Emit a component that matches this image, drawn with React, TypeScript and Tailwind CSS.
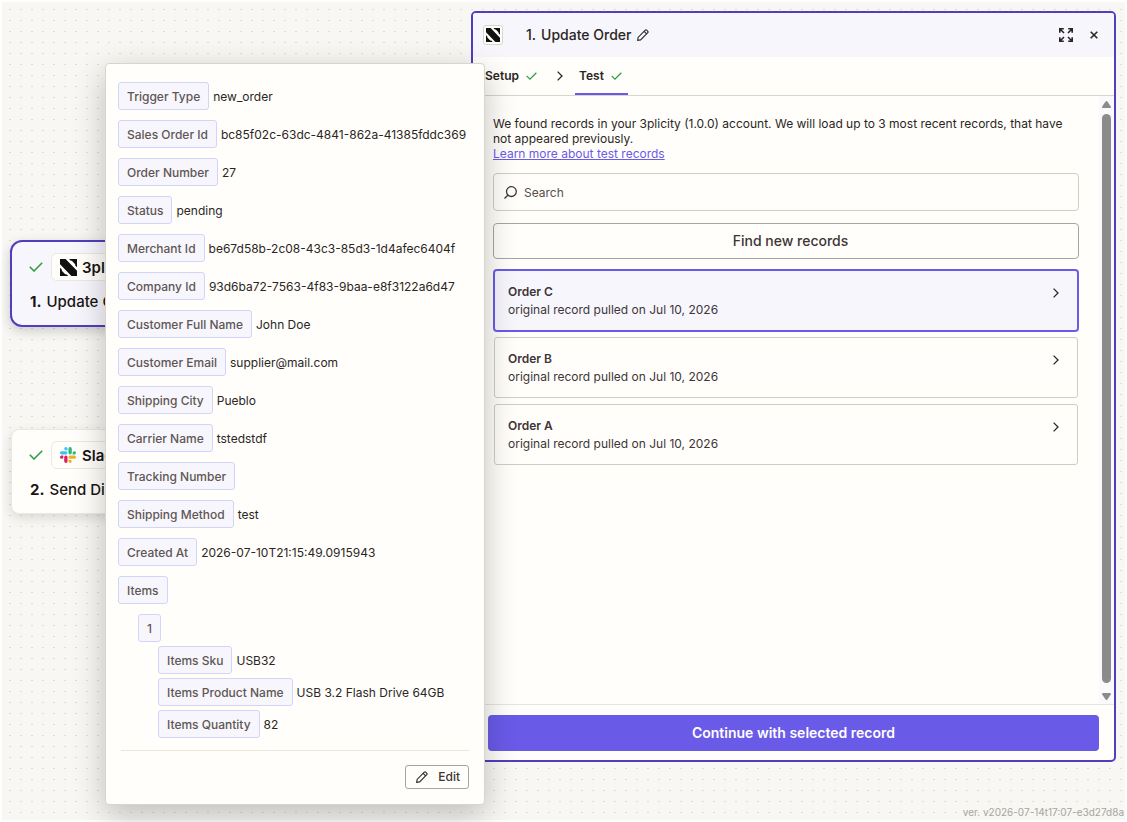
type IconProps = {
  className?: string;
};

type Field = {
  label: string;
  value?: string;
};

const fields: Field[] = [
  { label: "Trigger Type", value: "new_order" },
  { label: "Sales Order Id", value: "bc85f02c-63dc-4841-862a-41385fddc369" },
  { label: "Order Number", value: "27" },
  { label: "Status", value: "pending" },
  { label: "Merchant Id", value: "be67d58b-2c08-43c3-85d3-1d4afec6404f" },
  { label: "Company Id", value: "93d6ba72-7563-4f83-9baa-e8f3122a6d47" },
  { label: "Customer Full Name", value: "John Doe" },
  { label: "Customer Email", value: "supplier@mail.com" },
  { label: "Shipping City", value: "Pueblo" },
  { label: "Carrier Name", value: "tstedstdf" },
  { label: "Tracking Number" },
  { label: "Shipping Method", value: "test" },
  { label: "Created At", value: "2026-07-10T21:15:49.0915943" },
  { label: "Items" },
];

const itemFields: Field[] = [
  { label: "Items Sku", value: "USB32" },
  { label: "Items Product Name", value: "USB 3.2 Flash Drive 64GB" },
  { label: "Items Quantity", value: "82" },
];

const records = [
  { name: "Order C", selected: true },
  { name: "Order B", selected: false },
  { name: "Order A", selected: false },
];

const CheckIcon = ({ className }: IconProps) => (
  <svg viewBox="0 0 14 10" fill="none" className={className}>
    <path d="M0.8 4.8 5 9 13.2 0.8" stroke="#2ea043" strokeWidth="1.6" />
  </svg>
);

const PencilIcon = ({ className }: IconProps) => (
  <svg viewBox="0 0 12 12" fill="none" stroke="#2b2623" strokeWidth="1.1" className={className}>
    <path d="M0.7 11.3 1.1 8.4 8.3 1.2Q9 0.5 9.7 1.2L10.8 2.3Q11.5 3 10.8 3.7L3.6 10.9ZM7.2 2.4 9.6 4.8" />
  </svg>
);

const BrandIcon = ({ className }: IconProps) => (
  <svg viewBox="0 0 17 17" fill="#111111" className={className}>
    <path d="M0 0H5.6L17 11.8V17H11.4L0 5.2ZM9 0H17V8.2L15.2 6.4V5.2L11.8 1.8H10.8ZM0 8.8 1.8 10.6V11.8L5.2 15.2H6.4L8.2 17H0Z" />
  </svg>
);

const SlackIcon = ({ className }: IconProps) => (
  <svg viewBox="0 0 24 24" className={className}>
    <path
      fill="#36c5f0"
      d="M8.8 0a2.5 2.5 0 1 0 0 5h2.5V2.5A2.5 2.5 0 0 0 8.8 0ZM8.8 6.3H2.5a2.5 2.5 0 0 0 0 5h6.3a2.5 2.5 0 0 0 0-5Z"
    />
    <path
      fill="#2eb67d"
      d="M24 8.8a2.5 2.5 0 1 0-5 0v2.5h2.5A2.5 2.5 0 0 0 24 8.8ZM17.7 8.8V2.5a2.5 2.5 0 0 0-5 0v6.3a2.5 2.5 0 0 0 5 0Z"
    />
    <path
      fill="#ecb22e"
      d="M15.2 24a2.5 2.5 0 1 0 0-5h-2.5v2.5a2.5 2.5 0 0 0 2.5 2.5ZM15.2 17.7h6.3a2.5 2.5 0 0 0 0-5h-6.3a2.5 2.5 0 0 0 0 5Z"
    />
    <path
      fill="#e01e5a"
      d="M0 15.2a2.5 2.5 0 1 0 5 0v-2.5H2.5A2.5 2.5 0 0 0 0 15.2ZM6.3 15.2v6.3a2.5 2.5 0 0 0 5 0v-6.3a2.5 2.5 0 0 0-5 0Z"
    />
  </svg>
);

const ChevronIcon = ({ className }: IconProps) => (
  <svg viewBox="0 0 6 10" fill="none" className={className}>
    <path d="M0.6 0.6 5 5 0.6 9.4" stroke="#2b2623" strokeWidth="1.3" />
  </svg>
);

const ExpandIcon = () => (
  <svg viewBox="0 0 14 14" fill="none" stroke="#2b2623" strokeWidth="1.6" className="h-3.5 w-3.5">
    <path d="M0.8 4.8V0.8H4.8M0.8 0.8 5 5M9.2 0.8H13.2V4.8M13.2 0.8 9 5M0.8 9.2V13.2H4.8M0.8 13.2 5 9M13.2 9.2V13.2H9.2M13.2 13.2 9 9" />
  </svg>
);

const CloseIcon = () => (
  <svg viewBox="0 0 8 8" fill="none" className="h-2 w-2">
    <path d="M0.7 0.7 7.3 7.3M7.3 0.7 0.7 7.3" stroke="#2b2623" strokeWidth="1.6" />
  </svg>
);

const SearchIcon = () => (
  <svg viewBox="0 0 13 13" fill="none" stroke="#403536" strokeWidth="1.3" className="h-[13px] w-[13px]">
    <circle cx="7.4" cy="5.6" r="4.9" />
    <path d="M3.8 9.2 0.5 12.5" />
  </svg>
);

const FieldRow = ({ label, value }: Field) => (
  <div className="flex h-7 items-center gap-1 text-[12px] whitespace-nowrap">
    <span className="flex h-7 items-center rounded-[3px] border border-[#d3d4f9] bg-[#f7f6fd] px-2 pt-px font-medium text-[#5f5654]">
      {label}
    </span>
    {value && <span className="pt-px text-[#2b2623]">{value}</span>}
  </div>
);

const RecordPopup = () => (
  <div className="absolute top-[63px] left-[105px] flex h-[742px] w-[380px] flex-col rounded border border-[#d7d5cc] bg-[#fffefb] px-3 pt-[18px] shadow-[0_10px_32px_rgba(0,0,0,0.24)]">
    <div className="flex flex-col gap-2.5">
      {fields.map((field) => (
        <FieldRow key={field.label} {...field} />
      ))}
    </div>
    <div className="mt-2.5 flex flex-col gap-1 pl-5">
      <FieldRow label="1" />
      <div className="flex flex-col gap-1 pl-5">
        {itemFields.map((field) => (
          <FieldRow key={field.label} {...field} />
        ))}
      </div>
    </div>
    <div className="mx-[3px] mt-3 flex justify-end border-t border-[#e8e7dc] pt-3.5">
      <button className="flex h-6 w-16 items-center justify-between rounded-[3px] border border-[#a8a5a0] pr-2 pl-2.5 text-[12px] font-medium text-[#403536]">
        <PencilIcon className="h-3 w-3" />
        Edit
      </button>
    </div>
  </div>
);

const StepPanel = () => (
  <div className="absolute top-[11px] left-[471px] flex h-[751px] w-[645px] flex-col overflow-hidden rounded-[5px] border-2 border-[#503ebd] bg-[#fffefb]">
    <div className="flex h-11 shrink-0 items-center bg-[#f7f6fd] pr-4 pl-2.5">
      <div className="flex h-5 w-5 items-center justify-center rounded-[3px] border border-[#d7d5cc] bg-[#fffefb]">
        <BrandIcon className="h-3.5 w-3.5" />
      </div>
      <h1 className="ml-[23px] flex gap-[5px] pb-px text-[14px] font-medium text-[#2b2623]">
        <span>1.</span>
        <span>Update Order</span>
      </h1>
      <PencilIcon className="ml-1.5 h-3 w-3" />
      <div className="ml-auto flex items-center gap-[17px]">
        <ExpandIcon />
        <CloseIcon />
      </div>
    </div>

    <div className="flex h-[39px] shrink-0 items-stretch border-b border-[#d7d5cc] pl-3 text-[12px] font-semibold text-[#2b2623]">
      <div className="flex w-[52px] items-center justify-between">
        Setup
        <CheckIcon className="h-2 w-[11px]" />
      </div>
      <div className="flex w-[38px] items-center justify-center pl-[7px]">
        <ChevronIcon className="h-2.5 w-1.5" />
      </div>
      <div className="flex w-[53px] items-center justify-between border-b-2 border-[#695be8] pt-0.5 pr-1.5 pl-1">
        Test
        <CheckIcon className="h-2 w-[11px]" />
      </div>
    </div>

    <div className="flex min-h-0 flex-1">
      <div className="flex flex-1 flex-col px-5 pt-5">
        <p className="text-[12px] leading-[15px] text-[#2b2623]">
          We found records in your 3plicity (1.0.0) account. We will load up to 3 most recent records, that have
          not appeared previously.
          <br />
          <a className="text-[#695be8] underline">Learn more about test records</a>
        </p>
        <div className="mt-3 flex h-[38px] items-center gap-[7px] rounded border border-[#d0cdc2] px-2.5 text-[12px] text-[#574e4c]">
          <SearchIcon />
          <span className="pt-0.5">Search</span>
        </div>
        <button className="mt-3 h-9 rounded border border-[#a8a5a0] pb-0.5 pl-[9px] text-[14px] font-medium text-[#403536]">
          Find new records
        </button>
        <div className="mx-px mt-[11px] flex flex-col gap-1.5">
          {records.map(({ name, selected }) => (
            <div
              key={name}
              className={`flex h-[61px] justify-between rounded-[3px] border px-[13px] pt-3 text-[12px] leading-[18px] text-[#403536] ${
                selected
                  ? "border-[#695be8] bg-[#f7f6fd] shadow-[0_0_0_1px_#695be8]"
                  : "border-[#d0cdc2]"
              }`}
            >
              <div>
                <div className="font-semibold">{name}</div>
                <div>original record pulled on Jul 10, 2026</div>
              </div>
              <ChevronIcon className="mt-[5px] mr-[5px] h-2.5 w-1.5" />
            </div>
          ))}
        </div>
      </div>
      <div className="flex w-[15px] flex-col items-center bg-[#fafafc] pt-[5px] pb-1">
        <svg viewBox="0 0 9 7" fill="#8b8b8b" className="h-[7px] w-[9px]">
          <path d="M4.5 0Q5 0 5.4 0.5L8.8 5.5Q9.2 7 8 7H1Q-0.2 7 0.2 5.5L3.6 0.5Q4 0 4.5 0Z" />
        </svg>
        <div className="mt-1.5 mb-[7px] w-[9px] flex-1 rounded-full bg-[#8b8b8b]"></div>
        <svg viewBox="0 0 9 7" fill="#8b8b8b" className="mt-[3px] h-[7px] w-[9px]">
          <path d="M4.5 7Q5 7 5.4 6.5L8.8 1.5Q9.2 0 8 0H1Q-0.2 0 0.2 1.5L3.6 6.5Q4 7 4.5 7Z" />
        </svg>
      </div>
    </div>

    <div className="h-14 shrink-0 border-t border-[#e5e4e0] pt-2.5 pr-[15px] pl-[15px]">
      <button className="h-9 w-full rounded bg-[#695be8] pb-0.5 text-[14px] font-semibold text-[#fffefb]">
        Continue with selected record
      </button>
    </div>
  </div>
);

const App = () => {
  return (
    <div className="h-[822px] w-[1127px] overflow-hidden bg-white p-0.5 font-['Inter',sans-serif]">
      <div className="h-[818px] w-[1123px] bg-[#f8f7f4]">
        <svg className="block h-full w-full">
          <defs>
            <pattern id="dots" width="11" height="11" patternUnits="userSpaceOnUse">
              <rect x="7" y="7" width="2" height="1" fill="#dedcd6" />
            </pattern>
          </defs>
          <rect width="100%" height="100%" fill="url(#dots)" />
        </svg>
      </div>

      <div className="absolute top-[240px] left-[10px] h-[87px] w-[300px] rounded-xl border-2 border-[#503ebd] bg-[#f7f6fd] pt-[11px] pl-[17px] text-[15px] text-[#1a1513] shadow-[0_4px_12px_rgba(0,0,0,0.18)]">
        <div className="flex items-center">
          <CheckIcon className="h-2.5 w-3.5" />
          <div className="ml-2 flex h-7 items-center gap-1.5 rounded-md border border-[#ebe9df] bg-[#fffefb] px-2 font-semibold">
            <BrandIcon className="h-[17px] w-[17px]" />
            <span className="-ml-px pt-0.5">3plicity</span>
          </div>
        </div>
        <div className="mt-2.5 flex gap-[5px] pl-px font-medium">
          <span className="font-bold">1.</span>
          <span>Update O</span>
        </div>
      </div>

      <div className="absolute top-[429px] left-[11px] h-[85px] w-[296px] rounded-lg border border-[#ebe9df] bg-[#fffefb] pt-[11px] pl-[17px] text-[15px] text-[#1a1513] shadow-[0_4px_12px_rgba(0,0,0,0.12)]">
        <div className="flex items-center">
          <CheckIcon className="h-2.5 w-3.5" />
          <div className="ml-2 flex h-7 items-center gap-1.5 rounded-md border border-[#ebe9df] bg-[#fffefb] px-2 font-semibold">
            <SlackIcon className="h-4 w-4" />
            <span className="pt-0.5">Slack</span>
          </div>
        </div>
        <div className="mt-2.5 flex gap-[5px] pl-px font-medium">
          <span className="font-bold">2.</span>
          <span>Send Di</span>
        </div>
      </div>

      <StepPanel />
      <RecordPopup />

      <div className="absolute right-[3px] bottom-1 text-[10px] leading-3 text-[#a8a5a0]">
        ver. v2026-07-14t17:07-e3d27d8a
      </div>
    </div>
  );
};

export default App;
